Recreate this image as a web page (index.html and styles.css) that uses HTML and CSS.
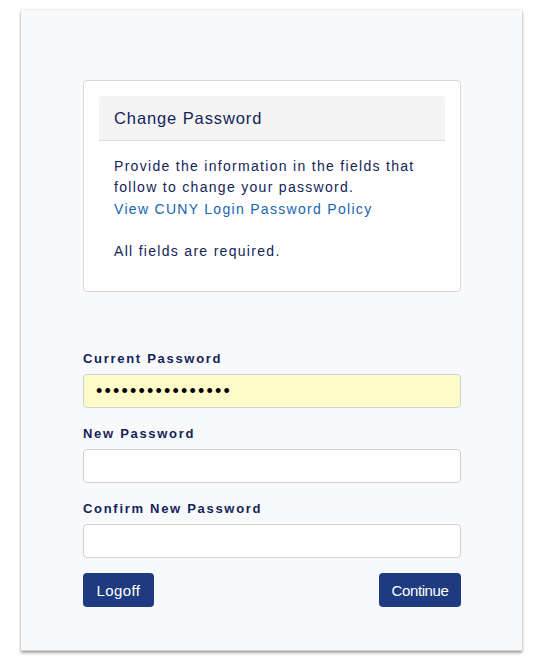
FILE: index.html
```html
<!DOCTYPE html>
<html lang="en">
<head>
    <meta charset="UTF-8">
    <meta name="viewport" content="width=device-width, initial-scale=1.0">
    <title>Change Password</title>
    <link rel="stylesheet" href="styles.css">
</head>
<body>
    <main class="panel">
        <div class="card">
            <div class="card-header">
                <h1>Change Password</h1>
            </div>
            <div class="card-body">
                <p>Provide the information in the fields that follow to change your password.<br>
                <a href="#" class="policy-link">View CUNY Login Password Policy</a></p>
                <p class="required">All fields are required.</p>
            </div>
        </div>

        <form class="form" onsubmit="return false">
            <div class="field">
                <label for="current">Current Password</label>
                <input type="password" id="current" class="input filled" value="aaaaaaaaaaaaaaaa">
            </div>
            <div class="field">
                <label for="newpass">New Password</label>
                <input type="password" id="newpass" class="input">
            </div>
            <div class="field">
                <label for="confirm">Confirm New Password</label>
                <input type="password" id="confirm" class="input">
            </div>
            <div class="actions">
                <button type="button" class="btn btn-logoff">Logoff</button>
                <button type="submit" class="btn btn-continue">Continue</button>
            </div>
        </form>
    </main>
</body>
</html>
```

FILE: styles.css
```css
* {
    box-sizing: border-box;
    margin: 0;
    padding: 0;
}
body {
    font-family: 'Liberation Sans', Arial, sans-serif;
    background-color: #fff;
    color: #14235a;
    padding: 10px 18px 20px 21px;
}
.panel {
    width: 501px;
    height: 641px;
    background-color: #f8f9fb;
    border-bottom: 1px solid #d4d4d4;
    box-shadow: 0 2px 3px rgba(0,0,0,0.35), 0 0 2px rgba(0,0,0,0.15);
    padding: 70px 61px 0 62px;
}
.card {
    background-color: #fff;
    border: 1px solid #d6d8db;
    border-radius: 4px;
    padding: 15px;
    height: 212px;
}
.card-header {
    background-color: #f4f4f4;
    border-bottom: 1px solid #dcdcdc;
    border-radius: 3px 3px 0 0;
    padding: 0 15px;
    height: 45px;
    display: flex;
    align-items: center;
}
.card-header h1 {
    font-size: 16.5px;
    font-weight: normal;
    letter-spacing: 0.9px;
}
.card-body {
    padding: 15px 15px 0;
    font-size: 14px;
    line-height: 21.4px;
    letter-spacing: 1.3px;
}
.card-body p {
    margin-bottom: 21px;
}
.policy-link {
    color: #1565b0;
    text-decoration: none;
}
.form {
    margin-top: 57px;
}
.field {
    margin-bottom: 16px;
}
.field label {
    display: block;
    font-size: 13px;
    font-weight: bold;
    letter-spacing: 1.7px;
    line-height: 20px;
    margin-bottom: 5px;
}
.input {
    display: block;
    width: 100%;
    height: 34px;
    border: 1px solid #cfd1d4;
    border-radius: 4px;
    background-color: #fff;
    padding: 0 12px;
    font-family: 'Liberation Sans', Arial, sans-serif;
    font-size: 18px;
    letter-spacing: 2.2px;
    color: #000;
}
.input.filled {
    background-color: #fffbc9;
}
.actions {
    display: flex;
    justify-content: space-between;
    margin-top: -1px;
}
.btn {
    height: 34px;
    background-color: #1e3a80;
    color: #fff;
    border: none;
    border-radius: 4px;
    font-family: 'Liberation Sans', Arial, sans-serif;
    font-size: 15px;
    text-align: center;
    cursor: pointer;
}
.btn-logoff {
    width: 71px;
    letter-spacing: 0.4px;
}
.btn-continue {
    width: 82px;
    letter-spacing: -0.4px;
}
```
